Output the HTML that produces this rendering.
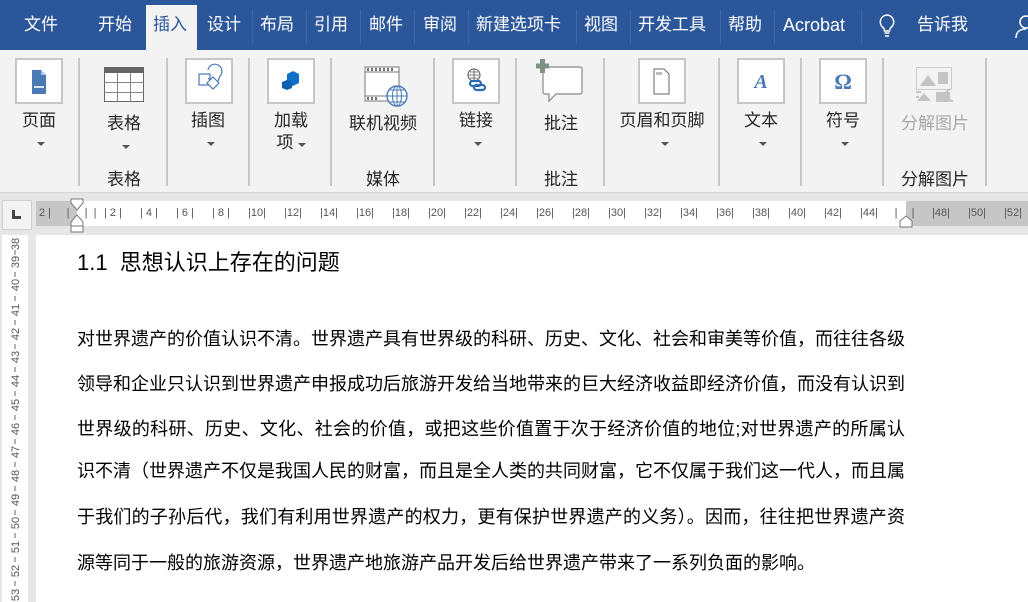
<!DOCTYPE html>
<html><head><meta charset="utf-8"><style>
*{margin:0;padding:0;box-sizing:border-box}
body{width:1028px;height:602px;overflow:hidden;background:#e6e6e6;font-family:"Liberation Sans","Microsoft YaHei","Noto Sans CJK SC",sans-serif;position:relative}
.a{position:absolute}
#top{left:0;top:0;width:1028px;height:50px;background:#2b579a}
.tab{position:absolute;top:14px;color:#fff;font-size:17px;line-height:22px;white-space:nowrap}
.tsep{position:absolute;top:10px;width:1px;height:34px;background:#3d67a6}
#rib{left:0;top:50px;width:1028px;height:143px;background:#f3f3f3;border-bottom:1px solid #d6d6d6}
.gsep{position:absolute;top:8px;width:2px;height:128px;background:#c8c8c8}
.box{position:absolute;width:48px;height:46px;border:2px solid #c6c6c6;background:#fff}
.lbl{position:absolute;font-size:17px;color:#262626;line-height:22px;white-space:nowrap;transform:translateX(-50%)}
.arr{position:absolute;width:0;height:0;border-left:4px solid transparent;border-right:4px solid transparent;border-top:4px solid #555;transform:translateX(-50%)}
.doc{font-family:"Liberation Sans","Noto Sans CJK SC",sans-serif;color:#000}
.ln{position:absolute;left:77px;width:828px;font-size:18px;line-height:24px;text-align:justify;text-align-last:justify;white-space:nowrap}
.rl{position:absolute;top:207px;font-size:11px;color:#555;white-space:pre;transform:translateX(-50%);font-family:"Liberation Sans",sans-serif}
</style></head><body>
<div id="top" class="a">
<div class="tab" style="left:24px">文件</div>
<div class="a" style="left:146px;top:5px;width:51px;height:45px;background:#f3f3f3"></div>
<div class="tab" style="left:98px">开始</div>
<div class="tab" style="left:153px;color:#2b579a">插入</div>
<div class="tab" style="left:207px">设计</div>
<div class="tsep" style="left:252px"></div>
<div class="tab" style="left:260px">布局</div>
<div class="tsep" style="left:306px"></div>
<div class="tab" style="left:314px">引用</div>
<div class="tsep" style="left:360px"></div>
<div class="tab" style="left:369px">邮件</div>
<div class="tsep" style="left:414px"></div>
<div class="tab" style="left:423px">审阅</div>
<div class="tsep" style="left:468px"></div>
<div class="tab" style="left:476px">新建选项卡</div>
<div class="tsep" style="left:576px"></div>
<div class="tab" style="left:584px">视图</div>
<div class="tsep" style="left:630px"></div>
<div class="tab" style="left:638px">开发工具</div>
<div class="tsep" style="left:720px"></div>
<div class="tab" style="left:728px">帮助</div>
<div class="tsep" style="left:774px"></div>
<div class="tab" style="left:783px;font-size:18px">Acrobat</div>
<div class="tsep" style="left:861px"></div>
<svg class="a" style="left:878px;top:13px" width="18" height="26" viewBox="0 0 18 26"><path d="M9 2a7 7 0 0 0-4 12.5c1 1 1.5 2 1.5 3.5h5c0-1.5.5-2.5 1.5-3.5A7 7 0 0 0 9 2z" fill="none" stroke="#fff" stroke-width="1.5"/><path d="M6.5 20h5M7 23h4" stroke="#fff" stroke-width="1.5"/></svg>
<div class="tab" style="left:917px">告诉我</div>
<svg class="a" style="left:1014px;top:14px" width="14" height="26" viewBox="0 0 14 26"><circle cx="12" cy="8" r="6" fill="none" stroke="#fff" stroke-width="1.5"/><path d="M2 24c0-6 4-9 10-9" fill="none" stroke="#fff" stroke-width="1.5"/></svg>
</div>

<div id="rib" class="a">
<div class="gsep" style="left:78px"></div><div class="gsep" style="left:166px"></div><div class="gsep" style="left:248px"></div><div class="gsep" style="left:330px"></div><div class="gsep" style="left:433px"></div><div class="gsep" style="left:515px"></div><div class="gsep" style="left:603px"></div><div class="gsep" style="left:718px"></div><div class="gsep" style="left:800px"></div><div class="gsep" style="left:882px"></div><div class="gsep" style="left:985px"></div>
<div class="box" style="left:15px;top:8px"><svg width="44" height="42"><path d="M15 10h9l5 5v19h-14z" fill="#4a7ab5"/><path d="M24 10v5h5" fill="#a9c2e0"/><path d="M17 26h10v2H17z" fill="#fff" opacity=".8"/></svg></div>
<div class="lbl" style="left:39px;top:60px">页面</div><div class="arr" style="left:41px;top:92px"></div>
<svg class="a" style="left:104px;top:17px" width="40" height="35"><rect x="0.5" y="0.5" width="39" height="34" fill="#fff" stroke="#666"/><rect x="0" y="0" width="40" height="6" fill="#666"/><path d="M13.5 6v29M26.5 6v29M0 15.5h40M0 25.5h40" stroke="#888"/></svg>
<div class="lbl" style="left:124px;top:63px">表格</div><div class="arr" style="left:126px;top:95px"></div>
<div class="lbl" style="left:124px;top:119px">表格</div>
<div class="box" style="left:185px;top:8px"><svg width="44" height="42"><rect x="12" y="14" width="11" height="11" fill="none" stroke="#4a7ab5" stroke-width="1.2"/><path d="M21 10a7 7 0 1 1 12 6l-4 10-8-8" fill="none" stroke="#4a7ab5" stroke-width="1.2"/><path d="M26 17l6 6-6 6-6-6z" fill="#fff" stroke="#4a7ab5" stroke-width="1.2"/></svg></div>
<div class="lbl" style="left:208px;top:60px">插图</div><div class="arr" style="left:211px;top:92px"></div>
<div class="box" style="left:267px;top:8px"><svg width="44" height="42"><path d="M18 14l6-3 6 3v9l-6 3-6-3z" fill="#1170c8"/><path d="M13 22l5-2 5 2v6l-5 2-5-2z" fill="#0b5fb0"/></svg></div>
<div class="lbl" style="left:291px;top:60px">加载</div><div class="lbl" style="left:285px;top:82px">项</div><div class="arr" style="left:302px;top:93px"></div>
<svg class="a" style="left:364px;top:16px" width="46" height="42"><rect x="1" y="1" width="34" height="34" fill="#fff" stroke="#777"/><path d="M1 6h34M1 30h34" stroke="#777"/><path d="M4 2v3M8 2v3M12 2v3M16 2v3M20 2v3M24 2v3M28 2v3M4 31v3M8 31v3M12 31v3" stroke="#777" stroke-width="2"/><circle cx="33" cy="30" r="10" fill="#fff" stroke="#4a7ab5" stroke-width="1.4"/><path d="M23 30h20M33 20v20M26 24h14M26 36h14" stroke="#4a7ab5"/><ellipse cx="33" cy="30" rx="4.5" ry="10" fill="none" stroke="#4a7ab5"/></svg>
<div class="lbl" style="left:383px;top:63px">联机视频</div>
<div class="lbl" style="left:383px;top:119px">媒体</div>
<div class="box" style="left:452px;top:8px"><svg width="44" height="42"><circle cx="20" cy="15" r="6" fill="none" stroke="#555"/><path d="M14 15h12M20 9v12M16 12h8M16 18h8" stroke="#555" stroke-width=".8"/><rect x="16" y="21" width="11" height="5" rx="2.5" fill="none" stroke="#2b6cb5" stroke-width="2.2"/><rect x="20" y="25" width="11" height="5" rx="2.5" fill="none" stroke="#2b6cb5" stroke-width="2.2"/></svg></div>
<div class="lbl" style="left:476px;top:60px">链接</div><div class="arr" style="left:478px;top:92px"></div>
<svg class="a" style="left:536px;top:9px" width="48" height="46"><path d="M7 8h37a2 2 0 0 1 2 2v23a2 2 0 0 1-2 2H20l-7 7v-7H9a2 2 0 0 1-2-2z" fill="#fff" stroke="#888" stroke-width="1.2"/><path d="M0 7h13M6.5 0v14" stroke="#7f9084" stroke-width="5"/></svg>
<div class="lbl" style="left:561px;top:63px">批注</div>
<div class="lbl" style="left:561px;top:119px">批注</div>
<div class="box" style="left:638px;top:8px"><svg width="44" height="42"><path d="M14 9h10l5 5v20H14z" fill="#fff" stroke="#666"/><path d="M16 12h6v3h-6z" fill="#bbb"/></svg></div>
<div class="lbl" style="left:662px;top:60px">页眉和页脚</div><div class="arr" style="left:665px;top:92px"></div>
<div class="box" style="left:737px;top:8px"><svg width="44" height="42"><text x="22" y="28" text-anchor="middle" font-family="Liberation Serif" font-style="italic" font-weight="bold" font-size="20" fill="#4a7ab5">A</text></svg></div>
<div class="lbl" style="left:761px;top:60px">文本</div><div class="arr" style="left:763px;top:92px"></div>
<div class="box" style="left:819px;top:8px"><svg width="44" height="42"><text x="22" y="29" text-anchor="middle" font-family="Liberation Serif" font-weight="bold" font-size="22" fill="#4a7ab5">Ω</text></svg></div>
<div class="lbl" style="left:843px;top:60px">符号</div><div class="arr" style="left:845px;top:92px"></div>
<svg class="a" style="left:916px;top:17px" width="38" height="35"><rect x="0.5" y="0.5" width="35" height="22" fill="none" stroke="#ccc"/><path d="M4 19l8-11 8 11z" fill="#c4c4c4"/><rect x="22" y="5" width="10" height="12" fill="#c4c4c4"/><path d="M1 34l7-8 7 8zM20 25h14v10H20z" fill="#c4c4c4"/><path d="M0 25h5M0 30h3M30 25l4-3M34 33l3 2" stroke="#c4c4c4" stroke-width="2"/></svg>
<div class="lbl" style="left:935px;top:63px;color:#a8a8a8">分解图片</div>
<div class="lbl" style="left:935px;top:119px">分解图片</div>
</div>

<div class="a" style="left:0;top:196px;width:1028px;height:406px;background:#e6e6e6"></div>
<div class="a" style="left:2px;top:200px;width:30px;height:30px;background:#f3f3f3;border:1px solid #d0d0d0"></div>
<div class="a" style="left:12px;top:210px;width:3px;height:9px;background:#444"></div><div class="a" style="left:12px;top:216px;width:9px;height:3px;background:#444"></div>
<div class="a" style="left:36px;top:201px;width:41px;height:25px;background:#c6c6c6"></div>
<div class="a" style="left:77px;top:201px;width:829px;height:25px;background:#fff"></div>
<div class="a" style="left:906px;top:201px;width:122px;height:25px;background:#c6c6c6"></div>
<div class="rl" style="left:45px">2 |</div>
<div class="rl" style="left:68px">|</div>
<div class="rl" style="left:86px">|</div>
<div class="rl" style="left:95px">|</div>
<div class="rl" style="left:113px">| 2 |</div><div class="rl" style="left:149px">| 4 |</div><div class="rl" style="left:185px">| 6 |</div><div class="rl" style="left:221px">| 8 |</div>
<div class="rl" style="left:257px">|10|</div><div class="rl" style="left:293px">|12|</div><div class="rl" style="left:329px">|14|</div><div class="rl" style="left:365px">|16|</div><div class="rl" style="left:401px">|18|</div><div class="rl" style="left:437px">|20|</div><div class="rl" style="left:473px">|22|</div><div class="rl" style="left:509px">|24|</div><div class="rl" style="left:545px">|26|</div><div class="rl" style="left:581px">|28|</div><div class="rl" style="left:617px">|30|</div><div class="rl" style="left:653px">|32|</div><div class="rl" style="left:689px">|34|</div><div class="rl" style="left:725px">|36|</div><div class="rl" style="left:761px">|38|</div><div class="rl" style="left:797px">|40|</div><div class="rl" style="left:833px">|42|</div><div class="rl" style="left:869px">|44|</div>
<div class="rl" style="left:896px">|</div><div class="rl" style="left:913px">|</div>
<div class="rl" style="left:941px">|48|</div><div class="rl" style="left:977px">|50|</div><div class="rl" style="left:1013px">|52|</div>
<svg class="a" style="left:70px;top:198px" width="14" height="36"><path d="M1 1h12v4l-6 7-6-7z" fill="#fff" stroke="#777"/><path d="M1 24l6-7 6 7v4H1z" fill="#fff" stroke="#777"/><rect x="1" y="28" width="12" height="6" fill="#fff" stroke="#777"/></svg>
<svg class="a" style="left:899px;top:215px" width="14" height="13"><path d="M1 12V6l6-5 6 5v6z" fill="#fff" stroke="#777"/></svg>

<div class="a" style="left:2px;top:235px;width:26px;height:367px;background:#fff"></div>
<svg class="a" style="left:6px;top:235px" width="18" height="367"><g font-family="Liberation Sans" font-size="11" fill="#555">
<text transform="translate(13,9) rotate(-90)" text-anchor="middle">38</text>
<text transform="translate(13,27) rotate(-90)" text-anchor="middle">39</text>
<text transform="translate(13,50) rotate(-90)" text-anchor="middle">40</text>
<text transform="translate(13,75) rotate(-90)" text-anchor="middle">41</text>
<text transform="translate(13,99) rotate(-90)" text-anchor="middle">42</text>
<text transform="translate(13,122) rotate(-90)" text-anchor="middle">43</text>
<text transform="translate(13,146) rotate(-90)" text-anchor="middle">44</text>
<text transform="translate(13,170) rotate(-90)" text-anchor="middle">45</text>
<text transform="translate(13,194) rotate(-90)" text-anchor="middle">46</text>
<text transform="translate(13,217) rotate(-90)" text-anchor="middle">47</text>
<text transform="translate(13,241) rotate(-90)" text-anchor="middle">48</text>
<text transform="translate(13,265) rotate(-90)" text-anchor="middle">49</text>
<text transform="translate(13,288) rotate(-90)" text-anchor="middle">50</text>
<text transform="translate(13,312) rotate(-90)" text-anchor="middle">51</text>
<text transform="translate(13,336) rotate(-90)" text-anchor="middle">52</text>
<text transform="translate(13,360) rotate(-90)" text-anchor="middle">53</text>
</g><g stroke="#666"><path d="M9 15v5M9 37v5M9 61v5M9 85v5M9 109v5M9 132v5M9 156v5M9 180v5M9 204v5M9 227v5M9 251v5M9 275v5M9 298v5M9 322v5M9 346v5"/></g></svg>

<div class="a" style="left:36px;top:235px;width:992px;height:367px;background:#fff"></div>
<div class="a doc" style="left:77px;top:249px;font-size:22px;line-height:28px;white-space:nowrap">1.1&nbsp; 思想认识上存在的问题</div>
<div class="doc">
<div class="ln" style="top:327px">对世界遗产的价值认识不清。世界遗产具有世界级的科研、历史、文化、社会和审美等价值，而往往各级</div>
<div class="ln" style="top:372px">领导和企业只认识到世界遗产申报成功后旅游开发给当地带来的巨大经济收益即经济价值，而没有认识到</div>
<div class="ln" style="top:417px">世界级的科研、历史、文化、社会的价值，或把这些价值置于次于经济价值的地位;对世界遗产的所属认</div>
<div class="ln" style="top:459px">识不清（世界遗产不仅是我国人民的财富，而且是全人类的共同财富，它不仅属于我们这一代人，而且属</div>
<div class="ln" style="top:505px">于我们的子孙后代，我们有利用世界遗产的权力，更有保护世界遗产的义务）。因而，往往把世界遗产资</div>
<div class="ln" style="top:551px;text-align-last:left">源等同于一般的旅游资源，世界遗产地旅游产品开发后给世界遗产带来了一系列负面的影响。</div>
</div>
</body></html>
